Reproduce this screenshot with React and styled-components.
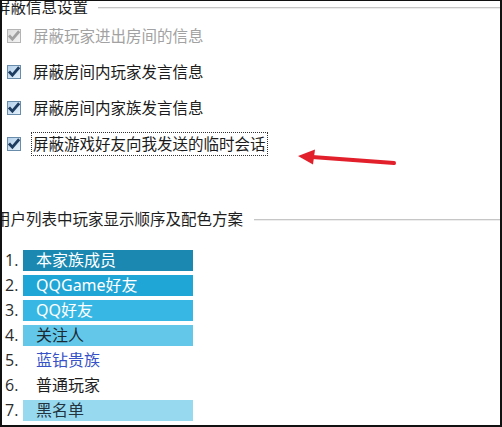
import React from "react";
import styled, { createGlobalStyle } from "styled-components";

const GlobalStyle = createGlobalStyle`
  html, body { margin: 0; padding: 0; background: #ffffff; }
  body { font-family: "Noto Sans", "Noto Sans CJK SC", sans-serif; }
`;

const Frame = styled.div`
  position: relative;
  width: 502px;
  height: 427px;
  box-sizing: border-box;
  border-top: 1px solid #111;
  border-left: 2px solid #111;
  border-right: 2px solid #111;
  border-bottom: 2px solid #111;
  background: #fff;
  overflow: hidden;
  font-family: "Noto Sans", "Noto Sans CJK SC", sans-serif;
`;

const Section = styled.section`
  margin-top: ${(p) => p.$top}px;
`;

const Legend = styled.div`
  display: flex;
  align-items: center;
  height: 13px;
`;

const LegendText = styled.span`
  margin-left: -7px;
  font-size: 15.5px;
  line-height: 13px;
  color: #1e1e1e;
  white-space: nowrap;
`;

const Rule = styled.div`
  flex: 1;
  margin-left: ${(p) => p.$gap}px;
  border-top: 1px solid #c6c6c6;
  border-bottom: 1px solid #ededed;
`;

const Options = styled.div`
  display: flex;
  flex-direction: column;
  margin-top: 4px;
`;

const Option = styled.label`
  display: flex;
  align-items: center;
  height: 36px;
  padding-left: 5px;
`;

const Box = styled.span`
  display: flex;
  align-items: center;
  justify-content: center;
  width: 14px;
  height: 14px;
  box-sizing: border-box;
  border: 1px solid ${(p) => (p.$disabled ? "#b4b4b4" : "#6a8cab")};
  background: ${(p) =>
    p.$disabled
      ? "linear-gradient(135deg, #dcdcdc, #f4f4f4)"
      : "linear-gradient(135deg, #b3d0ea, #e4f0fa)"};
  svg { display: block; }
`;

const Label = styled.span`
  margin-left: 10px;
  padding: 1px 1px;
  border: 1px dotted ${(p) => (p.$focused ? "#333" : "transparent")};
  font-size: 15.5px;
  line-height: 20px;
  color: ${(p) => (p.$disabled ? "#a2a2a2" : "#1b1b1b")};
  white-space: nowrap;
`;

const List = styled.ol`
  list-style: none;
  margin: 24px 0 0;
  padding: 0 0 0 3px;
  display: grid;
  row-gap: 4px;
`;

const Item = styled.li`
  display: grid;
  grid-template-columns: 18px 170px;
  height: 21px;
  align-items: center;
`;

const Num = styled.span`
  font-family: "Open Sans", "Liberation Sans", sans-serif;
  font-size: 16px;
  line-height: 21px;
  color: #2b2b2b;
`;

const Bar = styled.span`
  display: block;
  height: 21px;
  box-sizing: border-box;
  padding-left: 13px;
  background: ${(p) => p.$bg || "transparent"};
  color: ${(p) => p.$fg};
  font-size: 16px;
  line-height: 21px;
  white-space: nowrap;
`;

const Arrow = styled.svg`
  position: absolute;
  left: 290px;
  top: 140px;
  overflow: visible;
`;

const Check = ({ disabled }) => (
  <svg width="12" height="12" viewBox="0 0 12 12">
    <path
      d="M1 5.4 L4.4 9.2 L11.2 1.2"
      fill="none"
      stroke={disabled ? "#a0a0a0" : "#1d3c60"}
      strokeWidth="2.8"
      strokeLinejoin="miter"
    />
  </svg>
);

const options = [
  { text: "屏蔽玩家进出房间的信息", disabled: true },
  { text: "屏蔽房间内玩家发言信息" },
  { text: "屏蔽房间内家族发言信息" },
  { text: "屏蔽游戏好友向我发送的临时会话", focused: true },
];

const items = [
  { text: "本家族成员", bg: "#1a88b1", fg: "#ffffff" },
  { text: "QQGame好友", bg: "#1fa5d6", fg: "#ffffff" },
  { text: "QQ好友", bg: "#37b7e3", fg: "#ffffff" },
  { text: "关注人", bg: "#62c7e9", fg: "#1c2a33" },
  { text: "蓝钻贵族", fg: "#3652c6" },
  { text: "普通玩家", fg: "#1e1e1e" },
  { text: "黑名单", bg: "#97daf0", fg: "#24343e" },
];

export default function App() {
  return (
    <>
      <GlobalStyle />
      <Frame>
        <Section $top={0}>
          <Legend>
            <LegendText>屏蔽信息设置</LegendText>
            <Rule $gap={10} />
          </Legend>
          <Options>
            {options.map((o) => (
              <Option key={o.text}>
                <Box $disabled={o.disabled}>
                  <Check disabled={o.disabled} />
                </Box>
                <Label $disabled={o.disabled} $focused={o.focused}>
                  {o.text}
                </Label>
              </Option>
            ))}
          </Options>
        </Section>

        <Section $top={51}>
          <Legend>
            <LegendText>用户列表中玩家显示顺序及配色方案</LegendText>
            <Rule $gap={11} />
          </Legend>
          <List>
            {items.map((it, i) => (
              <Item key={it.text}>
                <Num>{i + 1}.</Num>
                <Bar $bg={it.bg} $fg={it.fg}>
                  {it.text}
                </Bar>
              </Item>
            ))}
          </List>
        </Section>

        <Arrow width="110" height="30" viewBox="0 0 110 30">
          <path d="M20 16 L102 22" stroke="#e2202c" strokeWidth="4" strokeLinecap="round" fill="none" />
          <path d="M6 15 L23 8.5 L21 23.5 Z" fill="#e2202c" />
        </Arrow>
      </Frame>
    </>
  );
}
